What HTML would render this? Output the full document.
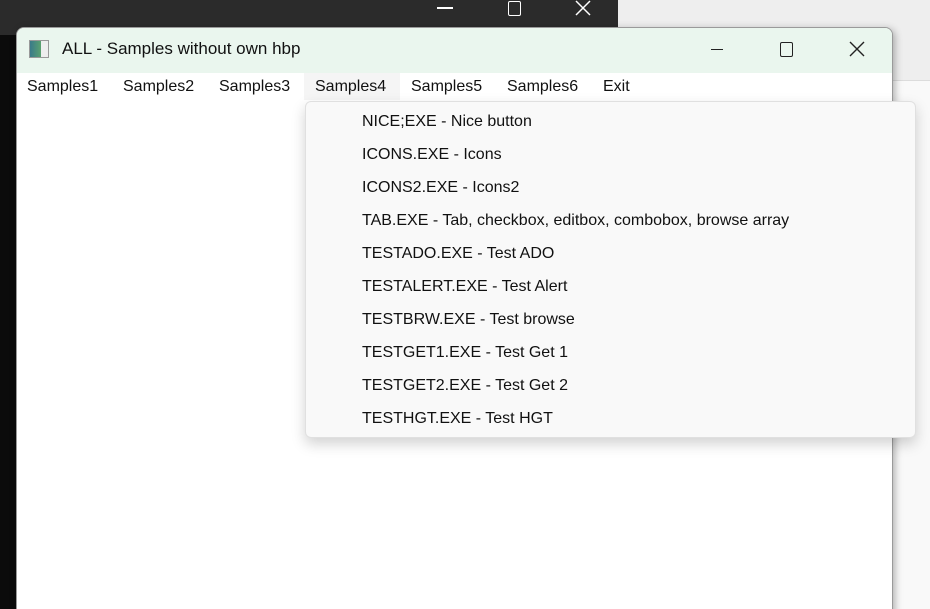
<!DOCTYPE html>
<html><head><style>
html,body{margin:0;width:930px;height:609px;overflow:hidden;}
body{position:relative;background:#0b0b0b;font-family:"Liberation Sans",sans-serif;}
.abs{position:absolute}
#topdark{left:0;top:0;width:618px;height:35px;background:#2b2b2b}
#right{left:618px;top:0;width:312px;height:80px;background:#eeeeee}
#right2{left:618px;top:80px;width:312px;height:529px;background:#f9f9f9;border-top:1px solid #dcdcdc}
#win{left:16px;top:27px;width:875px;height:600px;background:#fff;border:1px solid #9a9a9a;border-radius:8px;overflow:hidden;box-shadow:2px 2px 8px rgba(0,0,0,.3)}
#title{left:0;top:0;width:875px;height:45px;background:#eaf6ee}
#menu{left:0;top:45px;width:875px;height:27px;background:#fff;font-size:16px;color:#111}
#menu span{position:absolute;top:5px}
#popup{left:305px;top:101px;width:609px;height:335px;background:#f9f9f9;border:1px solid #e0e0e0;border-radius:6px;box-shadow:0 6px 14px rgba(0,0,0,.18)}
#popup div{position:absolute;left:56px;font-size:16px;color:#111}
</style></head><body>
<div class="abs" id="topdark"></div>
<div class="abs" style="left:437px;top:7px;width:16px;height:1.5px;background:#fff"></div>
<div class="abs" style="left:508px;top:1px;width:11px;height:13px;border:1.5px solid #fff;border-radius:2px"></div>
<svg class="abs" style="left:574px;top:0" width="18" height="16"><path d="M2 1L16 15M16 1L2 15" stroke="#fff" stroke-width="1.5"/></svg>
<div class="abs" id="right"></div>
<div class="abs" id="right2"></div>
<div class="abs" id="win">
 <div class="abs" id="title">
  <div class="abs" style="left:12px;top:12px;width:18px;height:16px;border:1px solid #999;background:linear-gradient(90deg,#3a7a8a 0,#5aa070 60%,#eee 60%)"></div>
  <div class="abs" style="left:45px;top:11px;font-size:17px;color:#111">ALL - Samples without own hbp</div>
  <div class="abs" style="left:694px;top:21px;width:12px;height:1.2px;background:#222"></div>
  <div class="abs" style="left:763px;top:14px;width:11px;height:13px;border:1.4px solid #222;border-radius:2px"></div>
  <svg class="abs" style="left:832px;top:13px" width="16" height="16"><path d="M1 1L15 15M15 1L1 15" stroke="#222" stroke-width="1.4"/></svg>
 </div>
 <div class="abs" id="menu">
  <div class="abs" style="left:287px;top:0;width:96px;height:27px;background:#f5f5f5"></div>
  <span style="left:10px">Samples1</span><span style="left:106px">Samples2</span><span style="left:202px">Samples3</span><span style="left:298px">Samples4</span><span style="left:394px">Samples5</span><span style="left:490px">Samples6</span><span style="left:586px">Exit</span>
 </div>
</div>
<div class="abs" id="popup">
<div style="top:11px">NICE;EXE - Nice button</div>
<div style="top:44px">ICONS.EXE - Icons</div>
<div style="top:77px">ICONS2.EXE - Icons2</div>
<div style="top:110px">TAB.EXE - Tab, checkbox, editbox, combobox, browse array</div>
<div style="top:143px">TESTADO.EXE - Test ADO</div>
<div style="top:176px">TESTALERT.EXE - Test Alert</div>
<div style="top:209px">TESTBRW.EXE - Test browse</div>
<div style="top:242px">TESTGET1.EXE - Test Get 1</div>
<div style="top:275px">TESTGET2.EXE - Test Get 2</div>
<div style="top:308px">TESTHGT.EXE - Test HGT</div>
</div>
</body></html>
